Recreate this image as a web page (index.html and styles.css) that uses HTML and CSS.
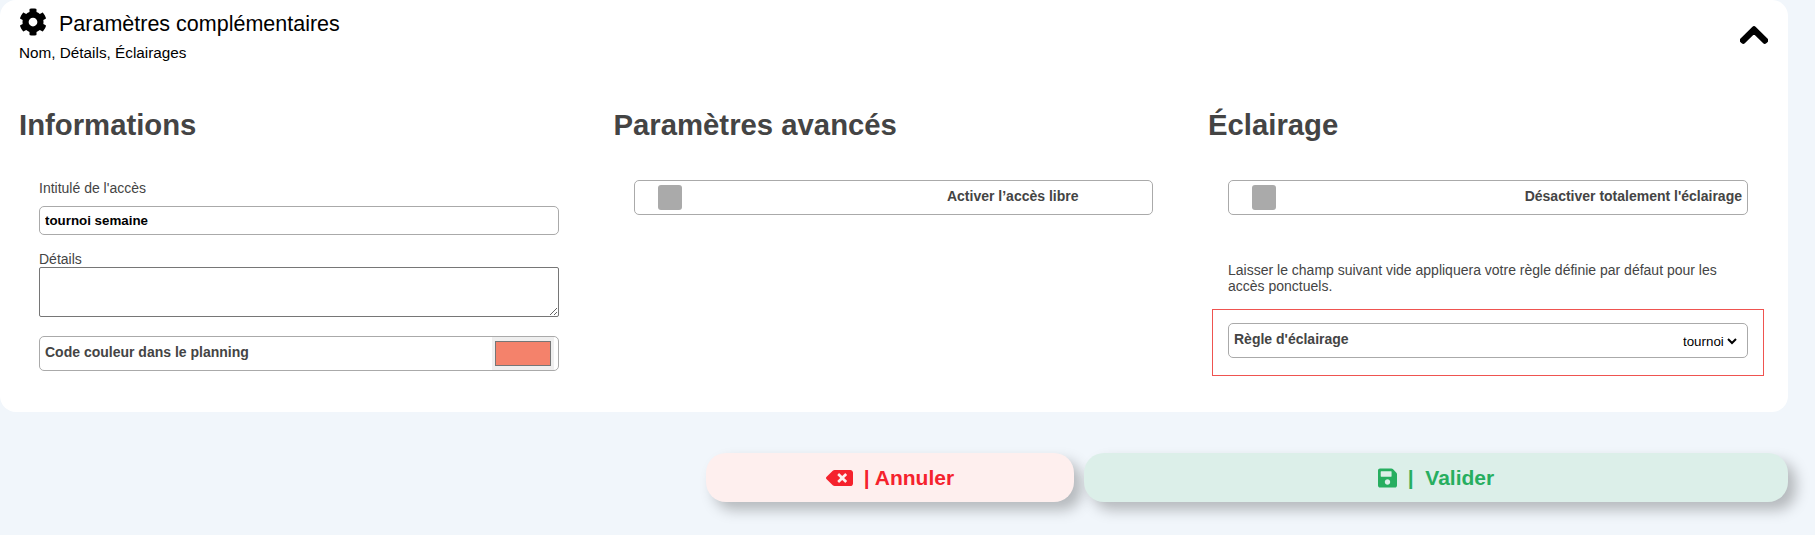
FILE: index.html
```html
<!DOCTYPE html>
<html lang="fr">
<head>
    <meta charset="UTF-8">
    <meta name="viewport" content="width=device-width, initial-scale=1.0">
    <title>Paramètres complémentaires</title>
    <link rel="stylesheet" href="styles.css">
</head>
<body>
    <div class="card">
        <div class="card-header">
            <div>
                <div class="card-title">
                    <svg class="gear-icon" viewBox="0 0 512 512"><path d="M487.4 315.7l-42.6-24.6c4.3-23.2 4.3-47 0-70.2l42.6-24.6c4.9-2.8 7.1-8.6 5.5-14-11.1-35.6-30-67.8-54.7-94.6-3.8-4.1-10-5.1-14.8-2.3L380.8 110c-17.9-15.4-38.5-27.3-60.8-35.1V25.8c0-5.6-3.9-10.5-9.4-11.7-36.7-8.2-74.3-7.8-109.2 0-5.5 1.2-9.4 6.1-9.4 11.7V75c-22.2 7.9-42.8 19.8-60.8 35.1L88.7 85.5c-4.9-2.8-11-1.9-14.8 2.3-24.7 26.7-43.6 58.9-54.7 94.6-1.7 5.4.6 11.2 5.5 14L67.3 221c-4.3 23.2-4.3 47 0 70.2l-42.6 24.6c-4.9 2.8-7.1 8.6-5.5 14 11.1 35.6 30 67.8 54.7 94.6 3.8 4.1 10 5.1 14.8 2.3l42.6-24.6c17.9 15.4 38.5 27.3 60.8 35.1v49.2c0 5.6 3.9 10.5 9.4 11.7 36.7 8.2 74.3 7.8 109.2 0 5.5-1.2 9.4-6.1 9.4-11.7v-49.2c22.2-7.9 42.8-19.8 60.8-35.1l42.6 24.6c4.9 2.8 11 1.9 14.8-2.3 24.7-26.7 43.6-58.9 54.7-94.6 1.5-5.5-.7-11.3-5.6-14.1zM256 336c-44.1 0-80-35.9-80-80s35.9-80 80-80 80 35.9 80 80-35.9 80-80 80z"/></svg>
                    <span>Paramètres complémentaires</span>
                </div>
                <div class="card-subtitle">Nom, Détails, Éclairages</div>
            </div>
            <svg class="chevron-icon" viewBox="0 0 448 512"><path d="M240.971 130.524l194.343 194.343c9.373 9.373 9.373 24.569 0 33.941l-22.667 22.667c-9.357 9.357-24.522 9.375-33.901.04L224 227.495 69.255 381.516c-9.379 9.335-24.544 9.317-33.901-.04l-22.667-22.667c-9.373-9.373-9.373-24.569 0-33.941L207.03 130.525c9.372-9.373 24.568-9.373 33.941-.001z"/></svg>
        </div>

        <div class="columns">
            <section class="column">
                <h2>Informations</h2>
                <div class="fields">
                    <label class="field-label first-label" for="intitule">Intitulé de l'accès</label>
                    <input class="text-input" id="intitule" type="text" value="tournoi semaine">
                    <label class="field-label details-label" for="details">Détails</label>
                    <textarea class="details-input" id="details"></textarea>
                    <div class="row-box color-row">
                        <span class="row-label">Code couleur dans le planning</span>
                        <input class="color-input" type="color" value="#f4826b">
                    </div>
                </div>
            </section>

            <section class="column">
                <h2>Paramètres avancés</h2>
                <div class="fields fields-narrow">
                    <div class="row-box toggle-row">
                        <span class="toggle"></span>
                        <span class="row-label free-label">Activer l’accès libre</span>
                    </div>
                </div>
            </section>

            <section class="column">
                <h2>Éclairage</h2>
                <div class="fields">
                    <div class="row-box toggle-row">
                        <span class="toggle"></span>
                        <span class="row-label light-label">Désactiver totalement l'éclairage</span>
                    </div>
                    <p class="help-text">Laisser le champ suivant vide appliquera votre règle définie par défaut pour les accès ponctuels.</p>
                    <div class="rule-box">
                        <div class="row-box select-row">
                            <span class="row-label">Règle d'éclairage</span>
                            <select class="rule-select">
                                <option>tournoi</option>
                            </select>
                        </div>
                    </div>
                </div>
            </section>
        </div>
    </div>

    <div class="actions">
        <button class="btn btn-cancel">
            <svg class="btn-icon cancel-icon" viewBox="0 0 640 512"><path d="M576 64H205.26A63.97 63.97 0 0 0 160 82.75L9.37 233.37c-12.5 12.5-12.5 32.76 0 45.25L160 429.25c12 12 28.28 18.75 45.25 18.75H576c35.35 0 64-28.65 64-64V128c0-35.35-28.65-64-64-64zm-84.69 254.06c6.25 6.25 6.25 16.38 0 22.63l-22.62 22.62c-6.25 6.25-16.38 6.25-22.63 0L384 301.25l-62.06 62.06c-6.25 6.25-16.38 6.25-22.63 0l-22.62-22.62c-6.25-6.25-6.25-16.38 0-22.63L338.75 256l-62.06-62.06c-6.25-6.25-6.25-16.38 0-22.63l22.62-22.62c6.25-6.25 16.38-6.25 22.63 0L384 210.75l62.06-62.06c6.25-6.25 16.38-6.25 22.63 0l22.62 22.62c6.25 6.25 6.25 16.38 0 22.63L429.25 256l62.06 62.06z"/></svg>
            <span>| Annuler</span>
        </button>
        <button class="btn btn-save">
            <svg class="btn-icon save-icon" viewBox="0 0 448 512"><path d="M433.941 129.941l-83.882-83.882A48 48 0 0 0 316.118 32H48C21.49 32 0 53.49 0 80v352c0 26.51 21.49 48 48 48h352c26.51 0 48-21.49 48-48V163.882a48 48 0 0 0-14.059-33.941zM224 416c-35.346 0-64-28.654-64-64 0-35.346 28.654-64 64-64s64 28.654 64 64c0 35.346-28.654 64-64 64zm96-304.52V212c0 6.627-5.373 12-12 12H76c-6.627 0-12-5.373-12-12V108c0-6.627 5.373-12 12-12h228.52c3.183 0 6.235 1.264 8.485 3.515l3.48 3.48A11.996 11.996 0 0 1 320 111.48z"/></svg>
            <span>|&nbsp; Valider</span>
        </button>
    </div>
</body>
</html>
```

FILE: styles.css
```css
* {
    margin: 0;
    padding: 0;
    box-sizing: border-box;
    font-family: "Liberation Sans", Arial, sans-serif;
}

body {
    background-color: #f1f6fb;
    height: 535px;
    overflow: hidden;
}

.card {
    width: 1788px;
    height: 412px;
    background: white;
    border-radius: 16px;
    padding: 8px 19px 0 19px;
}

.card-header {
    display: flex;
    justify-content: space-between;
    height: 62px;
}

.card-title {
    display: flex;
    align-items: center;
    gap: 12px;
    font-size: 21.5px;
    color: black;
    height: 27px;
}

.card-title span {
    margin-top: 5px;
}

.gear-icon {
    width: 28px;
    height: 28px;
}

.card-subtitle {
    font-size: 15.3px;
    color: black;
    margin-top: 9px;
}

.chevron-icon {
    width: 28px;
    height: 32px;
    margin: 11px 1px 0 0;
    stroke: black;
    stroke-width: 22;
}

.columns {
    display: grid;
    grid-template-columns: 594.5px 594.5px 560px;
}

.column h2 {
    font-size: 29.3px;
    font-weight: bold;
    color: #444;
    margin-top: 38px;
    line-height: 34px;
}

.fields {
    width: 520px;
    margin-left: 20px;
}

.fields-narrow {
    width: 519px;
}

.field-label {
    display: block;
    font-size: 14px;
    color: #444;
}

.first-label {
    margin-top: 38px;
    margin-bottom: 10px;
}

.details-label {
    margin-top: 16px;
    line-height: 16px;
}

.text-input {
    display: block;
    width: 100%;
    height: 29px;
    border: 1px solid #aaa;
    border-radius: 5px;
    padding: 0 5px;
    font-size: 13.33px;
    font-weight: bold;
    color: black;
}

.details-input {
    display: block;
    width: 100%;
    height: 50px;
    border: 1px solid #767676;
    border-radius: 2px;
    margin-bottom: 19px;
}

.row-box {
    display: flex;
    align-items: center;
    height: 35px;
    border: 1px solid #aaa;
    border-radius: 5px;
    padding: 0 5px;
}

.row-label {
    font-size: 14px;
    font-weight: bold;
    color: #444;
    margin-bottom: 4px;
}

.color-row {
    justify-content: space-between;
    padding: 0 4px 0 5px;
}

.color-input {
    width: 62px;
    height: 33px;
    border: none;
    background-color: #efefef;
    padding: 4px 3px;
}

.color-input::-webkit-color-swatch-wrapper {
    padding: 0;
}

.color-input::-webkit-color-swatch {
    border: 1px solid #767676;
}

.toggle-row {
    margin-top: 38px;
    padding-left: 23px;
}

.toggle {
    width: 24px;
    height: 25px;
    background-color: #aaa;
    border-radius: 3px;
}

.free-label {
    margin-left: auto;
    margin-right: 68px;
}

.light-label {
    margin-left: auto;
}

.help-text {
    font-size: 14px;
    line-height: 16px;
    color: #444;
    margin-top: 47px;
}

.rule-box {
    width: 552px;
    height: 67px;
    margin: 15px 0 0 -16px;
    border: 1px solid #ef5350;
    padding: 13px 15px 0 15px;
}

.select-row {
    justify-content: space-between;
    padding-right: 7px;
}

.rule-select {
    border: none;
    background: white;
    font-size: 13.33px;
    color: black;
    margin-top: 2px;
}

.actions {
    display: flex;
    justify-content: flex-end;
    gap: 10px;
    width: 1788px;
    margin-top: 41px;
}

.btn {
    display: flex;
    align-items: center;
    justify-content: center;
    gap: 11px;
    height: 49px;
    border: none;
    border-radius: 20px;
    font-size: 21px;
    font-weight: bold;
    box-shadow: 8px 8px 14px rgba(0,0,0,0.25);
}

.btn-cancel {
    width: 368px;
    background-color: #feefee;
    color: #f5222d;
}

.btn-save {
    width: 704px;
    background-color: #dcefe9;
    color: #27ae60;
}

.btn-icon {
    fill: currentColor;
}

.cancel-icon {
    width: 27px;
    height: 22px;
}

.save-icon {
    width: 19px;
    height: 22px;
}
```
